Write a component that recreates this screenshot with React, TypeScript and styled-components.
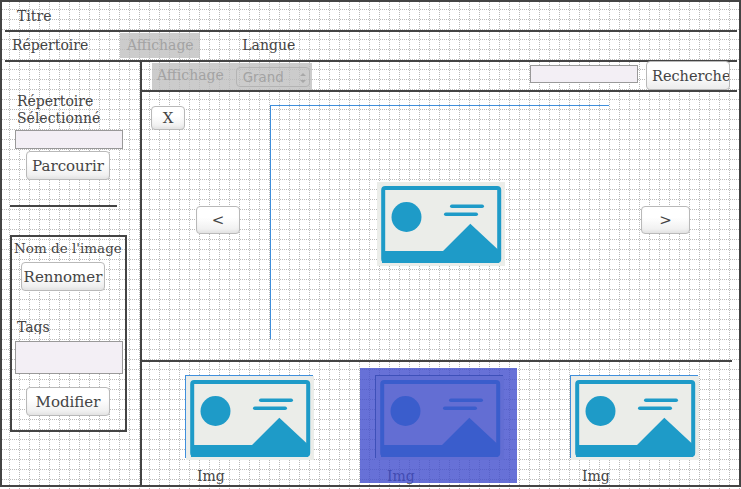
import React from "react";
import styled, { createGlobalStyle } from "styled-components";

const INK = "#444";
const DISABLED_TEXT = "#a3a3a3";

const GlobalStyle = createGlobalStyle`
  html, body {
    margin: 0;
    padding: 0;
    background: #fff;
  }
  * {
    box-sizing: border-box;
  }
`;

const PlaceholderIcon = () => (
  <IconSvg viewBox="0 0 128 84" width="128" height="84" aria-hidden="true">
    <rect width="128" height="84" fill="#ebede9" />
    <rect x="6.2" y="6" width="116" height="73" rx="2" fill="none" stroke="#1e9bc8" strokeWidth="4" />
    <circle cx="29.5" cy="35" r="15" fill="#1e9bc8" />
    <rect x="73" y="22.5" width="34" height="3.6" rx="1.8" fill="#1e9bc8" />
    <rect x="67" y="30.5" width="34" height="3.6" rx="1.8" fill="#1e9bc8" />
    <path d="M5 69 H66 L93.3 41.7 L122 68.5 V81 H5 Z" fill="#1e9bc8" />
  </IconSvg>
);

const Thumbnail = ({ offset, selected }: { offset: number; selected?: boolean }) => (
  <ThumbCell $offset={offset}>
    <ThumbImage $selected={selected}>
      <PlaceholderIcon />
    </ThumbImage>
    <ThumbLabel>Img</ThumbLabel>
    {selected && <SelectionOverlay />}
  </ThumbCell>
);

const App = () => (
  <Page>
    <GlobalStyle />
    <Frame>
      <TitleBar>Titre</TitleBar>
      <Rule />
      <MenuBar>
        <MenuItem>Répertoire</MenuItem>
        <MenuItem $disabled>Affichage</MenuItem>
        <MenuItem $last>Langue</MenuItem>
      </MenuBar>
      <Rule />
      <Body>
        <Sidebar>
          <FolderLabel>
            Répertoire
            <br />
            Sélectionné
          </FolderLabel>
          <TextField />
          <Button $width={84} $height={29} $left={16} $top={2}>
            Parcourir
          </Button>
          <SidebarRule />
          <DetailsBox>
            <ImageName>Nom de l'image</ImageName>
            <Button $width={84} $height={29} $left={9} $top={5}>
              Rennomer
            </Button>
            <TagsLabel>Tags</TagsLabel>
            <TagsField />
            <Button $width={84} $height={29} $left={14} $top={13}>
              Modifier
            </Button>
          </DetailsBox>
        </Sidebar>
        <Main>
          <Toolbar>
            <DisabledGroup>
              <GroupLabel>Affichage</GroupLabel>
              <SizeSelect>
                Grand
                <svg width="8" height="14" viewBox="0 0 8 14" aria-hidden="true">
                  <path d="M1 5 L4 2 L7 5 Z M1 9 L4 12 L7 9 Z" fill="#a8a8a8" />
                </svg>
              </SizeSelect>
            </DisabledGroup>
            <SearchField />
            <SearchButton>Recherche</SearchButton>
          </Toolbar>
          <Viewer>
            <ViewerLeft>
              <Button $width={34} $height={24} $left={9} $top={14}>
                X
              </Button>
              <Button $width={44} $height={28} $left={54} $top={76}>
                &lt;
              </Button>
            </ViewerLeft>
            <MainImage>
              <PlaceholderIcon />
            </MainImage>
            <ViewerRight>
              <Button $width={49} $height={28} $left={32} $top={114}>
                &gt;
              </Button>
            </ViewerRight>
          </Viewer>
          <ThumbStrip>
            <Thumbnail offset={28} />
            <Thumbnail offset={33} selected />
            <Thumbnail offset={38} />
          </ThumbStrip>
        </Main>
      </Body>
    </Frame>
  </Page>
);

export default App;

// =================================================================

const Page = styled.div`
  position: relative;
  isolation: isolate;
  width: 741px;
  height: 489px;
  overflow: hidden;
  font-family: "DejaVu Serif", serif;
  font-size: 14px;
  color: ${INK};

  /* dotted drawing-paper grid, one layer per direction */
  &::before,
  &::after {
    content: "";
    position: absolute;
    inset: 0;
    z-index: -1;
  }
  &::before {
    background: linear-gradient(to bottom, transparent 9px, #b9b9b9 9px) 0 0 / 10px 10px;
    -webkit-mask: linear-gradient(to right, #000 1px, transparent 1px) 0 0 / 2px 2px;
    mask: linear-gradient(to right, #000 1px, transparent 1px) 0 0 / 2px 2px;
  }
  &::after {
    background: linear-gradient(to right, transparent 9px, #b9b9b9 9px) 0 0 / 10px 10px;
    -webkit-mask: linear-gradient(to bottom, #000 1px, transparent 1px) 0 0 / 2px 2px;
    mask: linear-gradient(to bottom, #000 1px, transparent 1px) 0 0 / 2px 2px;
  }
`;

const Frame = styled.div`
  display: flex;
  flex-direction: column;
  width: 741px;
  height: 487px;
  border: 2px solid ${INK};
`;

const Rule = styled.div`
  flex: none;
  height: 2px;
  margin: 0 2px 0 3px;
  background: ${INK};
`;

const TitleBar = styled.div`
  height: 28px;
  padding-left: 15px;
  line-height: 28px;
`;

const MenuBar = styled.div`
  display: flex;
  height: 28px;
  padding-left: 10px;
`;

const MenuItem = styled.div<{ $disabled?: boolean; $last?: boolean }>`
  height: 25px;
  line-height: 27px;
  overflow: hidden;
  ${({ $disabled }) =>
    $disabled &&
    `
    width: 80px;
    margin: 1px 0 0 32px;
    line-height: 25px;
    text-align: center;
    color: ${DISABLED_TEXT};
    background: rgba(190, 190, 190, 0.78);
  `}
  ${({ $last }) => $last && `margin-left: 42px; height: 23px;`}
`;

const Body = styled.div`
  display: flex;
  flex: 1;
  min-height: 0;
`;

const Sidebar = styled.aside`
  flex: none;
  display: flex;
  flex-direction: column;
  align-items: flex-start;
  width: 140px;
  padding: 31px 0 0 8px;
  border-right: 2px solid ${INK};
`;

const FolderLabel = styled.div`
  margin-left: 7px;
  line-height: 17px;
`;

const TextField = styled.div`
  width: 108px;
  height: 19px;
  margin: 3px 0 0 5px;
  background: #f3eff5;
  border: 1px solid #999;
`;

const Button = styled.button<{ $width: number; $height: number; $left: number; $top: number }>`
  flex: none;
  display: block;
  width: ${({ $width }) => $width}px;
  height: ${({ $height }) => $height}px;
  margin: ${({ $top }) => $top}px 0 0 ${({ $left }) => $left}px;
  padding: 0;
  font: inherit;
  font-size: 15px;
  color: ${INK};
  white-space: nowrap;
  background: linear-gradient(to bottom, #fff 40%, #ececec 100%);
  border: 1px solid #b9b9b9;
  border-radius: 4px;
  box-shadow: inset 0 -2px 3px rgba(0, 0, 0, 0.04);
`;

const SidebarRule = styled.div`
  width: 107px;
  height: 2px;
  margin-top: 25px;
  background: ${INK};
`;

const DetailsBox = styled.div`
  width: 117px;
  height: 197px;
  margin-top: 28px;
  padding-top: 2px;
  border: 2px solid ${INK};
`;

const ImageName = styled.div`
  padding-left: 2px;
  font-size: 13.5px;
  line-height: 18px;
  white-space: nowrap;
`;

const TagsLabel = styled.div`
  height: 16px;
  margin-top: 27px;
  padding-left: 5px;
  line-height: 19px;
  overflow: hidden;
`;

const TagsField = styled.div`
  width: 108px;
  height: 33px;
  margin: 7px 0 0 3px;
  background: #f3eff5;
  border: 1px solid #999;
`;

const Main = styled.main`
  flex: 1;
  display: flex;
  flex-direction: column;
  min-width: 0;
`;

const Toolbar = styled.div`
  flex: none;
  display: flex;
  align-items: flex-start;
  height: 30px;
  margin-right: 2px;
  padding-left: 10px;
  border-bottom: 2px solid ${INK};
`;

const DisabledGroup = styled.div`
  display: flex;
  align-items: flex-start;
  width: 160px;
  height: 27px;
  margin-top: 1px;
  padding-left: 5px;
  color: ${DISABLED_TEXT};
  background: rgba(190, 190, 190, 0.78);
`;

const GroupLabel = styled.span`
  line-height: 25px;
`;

const SizeSelect = styled.div`
  display: flex;
  align-items: center;
  justify-content: space-between;
  width: 74px;
  height: 20px;
  margin: 4px 0 0 12px;
  padding: 1px 2px 0 6px;
  font-family: "DejaVu Sans", sans-serif;
  font-size: 13.33px;
  border: 1px solid #b4b4b4;
  border-radius: 4px;
`;

const SearchField = styled.div`
  width: 108px;
  height: 18px;
  margin: 3px 0 0 218px;
  background: #f3eff5;
  border: 1px solid #999;
`;

const SearchButton = styled.button`
  flex: none;
  width: 84px;
  height: 29px;
  margin: -1px 0 0 8px;
  padding: 0 0 0 5px;
  font: inherit;
  font-size: 14.5px;
  color: ${INK};
  text-align: left;
  background: linear-gradient(to bottom, #fff 40%, #ececec 100%);
  border: 1px solid #b9b9b9;
  border-radius: 4px;
  white-space: nowrap;
  overflow: hidden;
`;

const Viewer = styled.section`
  flex: none;
  display: flex;
  height: 270px;
  margin-right: 7px;
  border-bottom: 2px solid ${INK};
`;

const ViewerLeft = styled.div`
  flex: none;
  width: 128px;
`;

const MainImage = styled.div`
  flex: none;
  width: 339px;
  height: 234px;
  margin-top: 13px;
  padding: 76px 0 0 106px;
  border-left: 1px solid #3f8fdc;
  border-top: 1px solid #3f8fdc;
`;

const ViewerRight = styled.div`
  flex: none;
`;

const IconSvg = styled.svg`
  display: block;
  filter: blur(0.4px);
`;

const ThumbStrip = styled.div`
  flex: 1;
  display: flex;
  align-items: flex-start;
  min-height: 0;
  overflow: hidden;
`;

const ThumbCell = styled.div<{ $offset: number }>`
  position: relative;
  flex: none;
  width: 157px;
  height: 115px;
  margin: 6px 0 0 ${({ $offset }) => $offset}px;
  padding: 7px 0 0 15px;
`;

const ThumbImage = styled.div<{ $selected?: boolean }>`
  position: relative;
  width: 128px;
  height: 83px;
  padding: 1px 0 0 1px;
  &::after {
    content: "";
    position: absolute;
    inset: 0;
    border-left: 1px solid ${({ $selected }) => ($selected ? "#2f5a6a" : "#3f8fdc")};
    border-top: 1px solid ${({ $selected }) => ($selected ? "#2f5a6a" : "#3f8fdc")};
  }
`;

const ThumbLabel = styled.div`
  height: 16px;
  margin: 10px 0 0 12px;
  line-height: 17px;
  overflow: hidden;
`;

const SelectionOverlay = styled.div`
  position: absolute;
  inset: 0;
  background: rgba(65, 78, 205, 0.8);
`;
